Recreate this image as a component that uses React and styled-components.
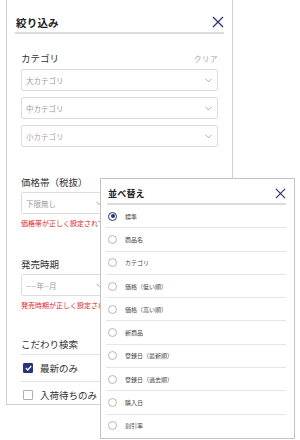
import React from "react";
import styled, { createGlobalStyle } from "styled-components";

const NAVY = "#27327c";

const GlobalStyle = createGlobalStyle`
  html, body {
    margin: 0;
    padding: 0;
    background: #ffffff;
  }
  body {
    font-family: "Noto Sans CJK JP", "Noto Sans", sans-serif;
    color: #333333;
  }
`;

const Page = styled.div`
  position: relative;
  width: 300px;
  height: 440px;
  overflow: hidden;
  background: #ffffff;
`;

const FilterPanel = styled.div`
  box-sizing: border-box;
  margin-left: 6px;
  width: 227px;
  height: 405px;
  border: 1px solid #d0d0d0;
  border-top: none;
  background: #ffffff;
  overflow: hidden;
`;

const PanelHeader = styled.div`
  display: flex;
  align-items: center;
  justify-content: space-between;
  height: ${({small}) => (small ? "19px" : "20px")};
  padding-top: ${({small}) => (small ? "5px" : "12px")};
  margin: ${({small}) => (small ? "0 8px 0 6px" : "0 8px")};
  border-bottom: 2px solid #dcdcdc;
`;

const PanelTitle = styled.div`
  font-size: ${({small}) => (small ? "9px" : "10.5px")};
  font-weight: 700;
  color: #222222;
  letter-spacing: 0.2px;
  padding-left: 1px;
`;

const CloseButton = styled.button`
  display: flex;
  align-items: center;
  justify-content: center;
  border: none;
  background: none;
  padding: 0;
  width: ${({size}) => size}px;
  height: ${({size}) => size}px;
  cursor: pointer;
`;

const PanelBody = styled.div`
  padding: 0 14px;
`;

const Section = styled.div`
  margin-top: ${({top}) => top}px;
`;

const LabelRow = styled.div`
  display: flex;
  align-items: center;
  justify-content: space-between;
  height: 14px;
  padding-bottom: ${({divider}) => (divider ? "3px" : "0")};
  border-bottom: ${({divider}) => (divider ? "1px solid #e2e2e2" : "none")};
`;

const Label = styled.div`
  font-size: 9.5px;
  color: #333333;
  line-height: 14px;
`;

const ClearLink = styled.span`
  font-size: 7.5px;
  color: #a8a8a8;
  letter-spacing: 0.5px;
`;

const SelectStack = styled.div`
  display: flex;
  flex-direction: column;
  gap: 6px;
  margin-top: 4px;
`;

const RangeRow = styled.div`
  display: flex;
  align-items: center;
  gap: 6px;
  margin-top: 3px;
`;

const SelectBox = styled.div`
  box-sizing: border-box;
  display: flex;
  align-items: center;
  justify-content: space-between;
  width: ${({half}) => (half ? "88px" : "100%")};
  height: 22px;
  padding: 0 5px 0 4px;
  border: 1px solid #dddddd;
  border-radius: 2px;
  background: #ffffff;
  font-size: 7.5px;
  color: ${({muted}) => (muted ? "#b79e9a" : "#9a9a9a")};
`;

const Tilde = styled.span`
  font-size: 8px;
  color: #666666;
`;

const ErrorText = styled.div`
  margin-top: 4px;
  font-size: 7px;
  line-height: 10px;
  color: #e0262b;
  white-space: nowrap;
`;

const CheckRow = styled.label`
  display: flex;
  align-items: center;
  gap: 7px;
  height: 26px;
  padding-left: 2px;
  border-bottom: ${({last}) => (last ? "none" : "1px solid #e2e2e2")};
  font-size: 9.5px;
  color: #333333;
`;

const CheckBox = styled.span`
  box-sizing: border-box;
  display: flex;
  align-items: center;
  justify-content: center;
  width: 10px;
  height: 10px;
  border-radius: 1px;
  border: 1px solid ${({checked}) => (checked ? NAVY : "#b0b0b0")};
  background: ${({checked}) => (checked ? NAVY : "#ffffff")};
`;

const SortPanel = styled.div`
  position: absolute;
  left: 100px;
  top: 178px;
  box-sizing: border-box;
  width: 195px;
  height: 261px;
  border: 1px solid #c4c4c4;
  background: #ffffff;
  overflow: hidden;
`;

const SortList = styled.div`
  margin: 0 8px 0 5px;
`;

const SortRow = styled.div`
  display: flex;
  align-items: center;
  gap: 8px;
  height: 22.3px;
  padding-left: 2px;
  border-bottom: ${({last}) => (last ? "none" : "1px solid #e6e6e6")};
  font-size: 6px;
  color: #444444;
`;

const Radio = styled.span`
  box-sizing: border-box;
  display: flex;
  align-items: center;
  justify-content: center;
  width: 9px;
  height: 9px;
  border-radius: 50%;
  border: ${({checked}) => (checked ? `1.3px solid ${NAVY}` : "1px solid #b8b8b8")};
  &::after {
    content: "";
    display: ${({checked}) => (checked ? "block" : "none")};
    width: 4px;
    height: 4px;
    border-radius: 50%;
    background: ${NAVY};
  }
`;

function CloseIcon({size}) {
    return (
        <CloseButton size={size}>
            <svg width={size} height={size} viewBox="0 0 12 12">
                <path d="M1 1 L11 11 M11 1 L1 11" stroke={NAVY} strokeWidth="1.3" fill="none"/>
            </svg>
        </CloseButton>
    );
}

function Chevron() {
    return (
        <svg width="7" height="5" viewBox="0 0 7 5">
            <path d="M0.5 0.8 L3.5 3.8 L6.5 0.8" stroke="#a0a0a0" strokeWidth="0.9" fill="none"/>
        </svg>
    );
}

function Select({children, half, muted}) {
    return (
        <SelectBox half={half} muted={muted}>
            <span>{children}</span>
            <Chevron/>
        </SelectBox>
    );
}

function Check({checked, children, last}) {
    return (
        <CheckRow last={last}>
            <CheckBox checked={checked}>
                {checked && (
                    <svg width="7" height="6" viewBox="0 0 7 6">
                        <path d="M0.8 3 L2.8 5 L6.2 1" stroke="#fff" strokeWidth="1.2" fill="none"/>
                    </svg>
                )}
            </CheckBox>
            {children}
        </CheckRow>
    );
}

const sortOptions = [
    "標準",
    "商品名",
    "カテゴリ",
    "価格（低い順）",
    "価格（高い順）",
    "新商品",
    "登録日（最新順）",
    "登録日（過去順）",
    "購入日",
    "割引率"
];

export default function App() {
    return (
        <Page>
            <GlobalStyle/>
            <FilterPanel>
                <PanelHeader>
                    <PanelTitle>絞り込み</PanelTitle>
                    <CloseIcon size={12}/>
                </PanelHeader>
                <PanelBody>
                    <Section top={17}>
                        <LabelRow>
                            <Label>カテゴリ</Label>
                            <ClearLink>クリア</ClearLink>
                        </LabelRow>
                        <SelectStack>
                            <Select>大カテゴリ</Select>
                            <Select>中カテゴリ</Select>
                            <Select muted>小カテゴリ</Select>
                        </SelectStack>
                    </Section>
                    <Section top={28}>
                        <LabelRow>
                            <Label>価格帯（税抜）</Label>
                        </LabelRow>
                        <RangeRow>
                            <Select half>下限無し</Select>
                            <Tilde>〜</Tilde>
                            <Select half>上限無し</Select>
                        </RangeRow>
                        <ErrorText>価格帯が正しく設定されていません</ErrorText>
                    </Section>
                    <Section top={29}>
                        <LabelRow>
                            <Label>発売時期</Label>
                        </LabelRow>
                        <RangeRow>
                            <Select half>----年--月</Select>
                            <Tilde>〜</Tilde>
                            <Select half>----年--月</Select>
                        </RangeRow>
                        <ErrorText>発売時期が正しく設定されていません</ErrorText>
                    </Section>
                    <Section top={27}>
                        <LabelRow divider>
                            <Label>こだわり検索</Label>
                        </LabelRow>
                        <Check checked>最新のみ</Check>
                        <Check last>入荷待ちのみ</Check>
                    </Section>
                </PanelBody>
            </FilterPanel>

            <SortPanel>
                <PanelHeader small>
                    <PanelTitle small>並べ替え</PanelTitle>
                    <CloseIcon size={11}/>
                </PanelHeader>
                <SortList>
                    {sortOptions.map((option, index) => (
                        <SortRow key={option} last={index === sortOptions.length - 1}>
                            <Radio checked={index === 0}/>
                            {option}
                        </SortRow>
                    ))}
                </SortList>
            </SortPanel>
        </Page>
    );
}
